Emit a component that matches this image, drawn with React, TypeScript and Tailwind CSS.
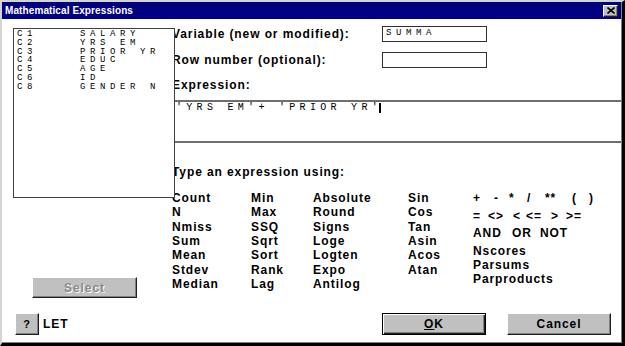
const sans = "font-['Liberation_Sans',Arial,sans-serif]";
const mono = "font-['Liberation_Mono','Courier_New',monospace]";

const columns = [
  { id: "c1", name: "SALARY" },
  { id: "c2", name: "YRS EM" },
  { id: "c3", name: "PRIOR YR" },
  { id: "c4", name: "EDUC" },
  { id: "c5", name: "AGE" },
  { id: "c6", name: "ID" },
  { id: "c8", name: "GENDER N" },
];

const funcCols = [
  { w: "w-[79px]", items: ["Count", "N", "Nmiss", "Sum", "Mean", "Stdev", "Median"] },
  { w: "w-[62px]", items: ["Min", "Max", "SSQ", "Sqrt", "Sort", "Rank", "Lag"] },
  { w: "w-[95px]", items: ["Absolute", "Round", "Signs", "Loge", "Logten", "Expo", "Antilog"] },
  { w: "w-[65px]", items: ["Sin", "Cos", "Tan", "Asin", "Acos", "Atan"] },
];

const bevel =
  "bg-[#c0c0c0] border border-t-white border-l-white border-r-[#202020] border-b-[#202020] shadow-[inset_-1px_-1px_0_#808080]";

export default function App() {
  return (
    <div className={`w-[625px] h-[346px] bg-white border-t-2 border-l-2 border-t-[#d4d4d4] border-l-[#d4d4d4] border-r-[3px] border-b-[3px] border-r-black border-b-black ${sans}`}>
      <div className="h-full border-r border-b border-[#808080] flex flex-col">
        {/* title bar */}
        <div className="h-[17px] bg-[#000080] flex items-center justify-between pl-[3px] pr-[3px]">
          <span className="text-white text-[10px] font-bold tracking-[0.1px]">Mathematical Expressions</span>
          <div className={`w-[15px] h-[12px] flex items-center justify-center ${bevel}`}>
            <svg width="8" height="7" viewBox="0 0 8 7">
              <path d="M0.5 0.5L7.5 6.5M7.5 0.5L0.5 6.5" stroke="black" strokeWidth="1.6" />
            </svg>
          </div>
        </div>

        <div className="flex">
          {/* left column */}
          <div className="w-[173px] shrink-0 flex flex-col">
            <div className={`relative z-10 ml-[11px] mt-[9px] w-[162px] h-[170px] bg-white border border-[#404040] pt-[1px] pl-[3px] ${mono} text-[9px] leading-[8.8px] tracking-[4.6px] text-black`}>
              {columns.map((c) => (
                <div key={c.id} className="flex whitespace-pre">
                  <span className="w-[63px]">{c.id.toUpperCase()}</span>
                  <span>{c.name}</span>
                </div>
              ))}
            </div>
            <button className={`ml-[30px] mt-[79px] w-[105px] h-[21px] text-[12px] font-bold tracking-[0.9px] text-[#8a8a8a] [text-shadow:1px_1px_0_#fff] ${bevel}`}>
              Select
            </button>
          </div>

          {/* right column */}
          <div className="-ml-[3px] flex-1 flex flex-col text-[12px] font-bold tracking-[0.9px] text-black">
            <div className="mt-[7px] flex items-center h-[16px]">
              <span className="w-[210px]">Variable (new or modified):</span>
              <div className={`w-[105px] h-[16px] border border-[#303030] pl-[3px] ${mono} font-normal text-[9px] leading-[12px] tracking-[4.6px]`}>SUMMA</div>
            </div>
            <div className="mt-[10px] flex items-center h-[16px]">
              <span className="w-[210px]">Row number (optional):</span>
              <div className="w-[105px] h-[16px] border border-[#303030]" />
            </div>
            <div className="mt-[9px] leading-[16px]">Expression:</div>
            <div className={`mt-[7px] h-[43px] border-t-2 border-b-2 border-[#6e6e6e] pl-[4px] pt-[1px] ${mono} font-normal text-[10px] leading-[9px] tracking-[4.3px] whitespace-pre`}>
              'YRS EM'+ 'PRIOR YR'<span className="inline-block w-[2px] h-[10px] bg-black align-top -ml-[3px]" />
            </div>
            <div className="mt-[21px] leading-[16px]">Type an expression using:</div>

            <div className="mt-[11px] flex">
              {funcCols.map((col, i) => (
                <div key={i} className={`${col.w} flex flex-col leading-[14.33px]`}>
                  {col.items.map((f) => (
                    <span key={f}>{f}</span>
                  ))}
                </div>
              ))}
              <div className="flex flex-col">
                <div className="h-[18px] leading-[14px] flex whitespace-pre">
                  <span className="w-[21px]">+</span>
                  <span className="w-[15px]">-</span>
                  <span className="w-[18px]">*</span>
                  <span className="w-[18px]">/</span>
                  <span className="w-[27px]">**</span>
                  <span className="w-[17px]">(</span>
                  <span>)</span>
                </div>
                <div className="h-[17px] leading-[14px] flex whitespace-pre">
                  <span className="w-[15px]">=</span>
                  <span className="w-[25px]">&lt;&gt;</span>
                  <span className="w-[13px]">&lt;</span>
                  <span className="w-[25px]">&lt;=</span>
                  <span className="w-[15px]">&gt;</span>
                  <span>&gt;=</span>
                </div>
                <div className="h-[18px] leading-[14px] flex">
                  <span className="w-[39px]">AND</span>
                  <span className="w-[28px]">OR</span>
                  <span>NOT</span>
                </div>
                <div className="h-[14px] leading-[14px]">Nscores</div>
                <div className="h-[14px] leading-[14px]">Parsums</div>
                <div className="h-[14px] leading-[14px]">Parproducts</div>
              </div>
            </div>
          </div>
        </div>

        {/* bottom row */}
        <div className="mt-[15px] flex items-center text-[12px] font-bold tracking-[0.9px] text-black">
          <button className={`ml-[13px] w-[24px] h-[22px] text-[11px] ${bevel}`}>?</button>
          <span className="ml-[4px]">LET</span>
          <div className="flex-1" />
          <button className="w-[104px] h-[22px] bg-[#c0c0c0] border border-black shadow-[inset_1px_1px_0_#fff,inset_-1px_-1px_0_#202020,inset_-2px_-2px_0_#808080]">
            <span className="underline">O</span>K
          </button>
          <button className={`ml-[21px] mr-[10px] w-[104px] h-[22px] ${bevel}`}>Cancel</button>
        </div>
      </div>
    </div>
  );
}
